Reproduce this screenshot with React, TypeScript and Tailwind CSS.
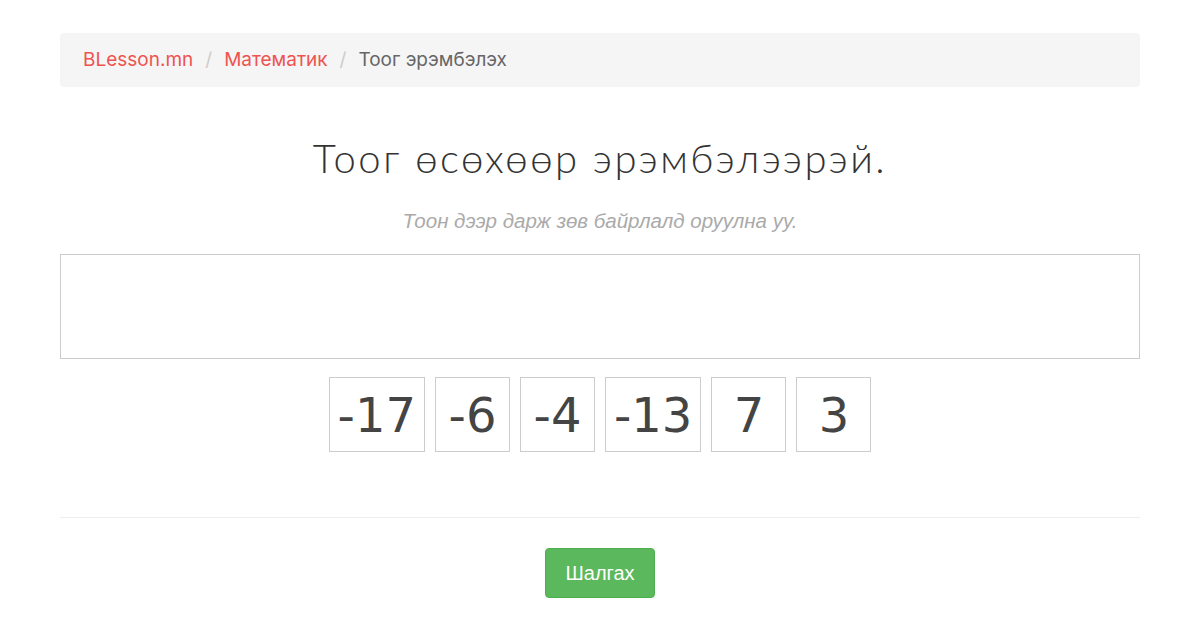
import React from 'react';

const numbers = ['-17', '-6', '-4', '-13', '7', '3'];

const App: React.FC = () => {
  return (
    <div className="min-h-[628px] bg-white px-[60px] pt-[33px]">
      <nav className="flex h-[54px] items-center rounded bg-[#f5f5f5] px-[23px] text-[19px] font-['Inter',sans-serif]">
        <a className="text-[#ef5350]">BLesson.mn</a>
        <span className="px-[12px] text-[#ccc]">/</span>
        <a className="text-[#ef5350]">Математик</a>
        <span className="px-[12px] text-[#ccc]">/</span>
        <span className="text-[#666]">Тоог эрэмбэлэх</span>
      </nav>

      <h1 className="mt-[47px] text-center text-[40px] font-light leading-[48px] tracking-[2.5px] text-[#333] font-['Lato',sans-serif]">
        Тоог өсөхөөр эрэмбэлээрэй.
      </h1>
      <p className="mt-[26px] text-center text-[20.5px] italic leading-[26px] text-[#aaa] font-['Liberation_Sans',sans-serif]">
        Тоон дээр дарж зөв байрлалд оруулна уу.
      </p>

      <div className="mt-[20px] h-[105px] border border-[#ccc]"></div>

      <div className="mt-[18px] flex justify-center gap-[10px]">
        {numbers.map((n, i) => (
          <div
            key={i}
            className="flex h-[75px] min-w-[75px] items-center justify-center border border-[#ccc] px-[8px] text-[48px] text-[#444] font-['DejaVu_Sans',sans-serif]"
          >
            {n}
          </div>
        ))}
      </div>

      <hr className="mt-[65px] border-t border-[#eee]" />

      <div className="mt-[30px] flex justify-center">
        <button className="h-[50px] w-[110px] rounded border border-[#4cae4c] bg-[#5cb85c] text-[20px] text-white font-['Liberation_Sans',sans-serif]">
          Шалгах
        </button>
      </div>
    </div>
  );
};

export default App;
